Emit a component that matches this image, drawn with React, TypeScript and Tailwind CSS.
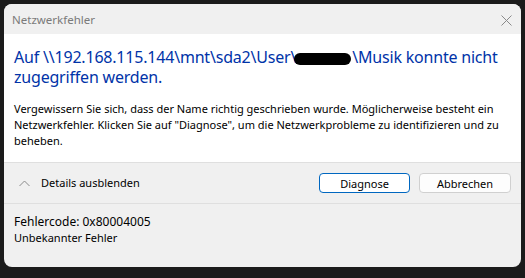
import React from "react"

const font = { fontFamily: '"Noto Sans", "Liberation Sans", sans-serif' }

const CloseIcon = () => (
    <svg width="11" height="11" viewBox="0 0 11 11" className="text-[#8a8a8a]">
        <path d="M0.5 0.5 L10.5 10.5 M10.5 0.5 L0.5 10.5" stroke="currentColor" strokeWidth="1" fill="none" />
    </svg>
)

const ChevronUp = () => (
    <svg width="11" height="7" viewBox="0 0 11 7" className="text-[#8a8a8a]">
        <path d="M0.5 6 L5.5 1 L10.5 6" stroke="currentColor" strokeWidth="1" fill="none" />
    </svg>
)

const App: React.FC = () => {
    return (
        <div className="w-[525px] h-[278px] bg-[#1b1b1b] pt-[4px] pl-[4px]" style={font}>
            <div className="w-[517px] h-[263px] rounded-lg overflow-hidden bg-[#f0f0f0] flex flex-col">
                {/* title bar */}
                <div className="h-[30px] flex items-center justify-between pl-[8px] pr-[9px] pt-[2px] bg-[#f0f0f0]">
                    <span className="text-[11.5px] text-[#7a7a7a]">Netzwerkfehler</span>
                    <CloseIcon />
                </div>

                {/* content */}
                <div className="h-[128px] bg-white pl-[10px] pr-[8px] pt-[13px]">
                    <p className="text-[16px] leading-[20px] text-[#0033a8] tracking-[-0.2px]">
                        Auf \\192.168.115.144\mnt\sda2\User\
                        <span className="inline-block align-middle w-[57px] h-[12px] bg-black rounded-full -ml-[2px] mr-[1px]" />
                        \Musik konnte nicht zugegriffen werden.
                    </p>
                    <p className="mt-[14px] text-[11px] leading-[16px] text-black">
                        Vergewissern Sie sich, dass der Name richtig geschrieben wurde. Möglicherweise besteht ein Netzwerkfehler. Klicken Sie auf "Diagnose", um die Netzwerkprobleme zu identifizieren und zu beheben.
                    </p>
                </div>

                {/* footer */}
                <div className="h-[42px] border-t border-b border-[#dfdfdf] flex items-center pl-[15px] pr-[10px]">
                    <ChevronUp />
                    <span className="ml-[11px] text-[11px] text-black">Details ausblenden</span>
                    <div className="ml-auto flex gap-[9px]">
                        <button className="w-[91px] h-[20px] rounded-[4px] border border-[#0067c0] bg-white text-[11px] leading-none text-black">
                            Diagnose
                        </button>
                        <button className="w-[92px] h-[20px] rounded-[4px] border border-[#d0d0d0] bg-[#fdfdfd] text-[11px] leading-none text-black">
                            Abbrechen
                        </button>
                    </div>
                </div>

                {/* details */}
                <div className="flex-1 px-[10px] pt-[10px] leading-[16px] text-black">
                    <p className="text-[12px]">Fehlercode: 0x80004005</p>
                    <p className="text-[11px]">Unbekannter Fehler</p>
                </div>
            </div>
        </div>
    )
}

export default App
